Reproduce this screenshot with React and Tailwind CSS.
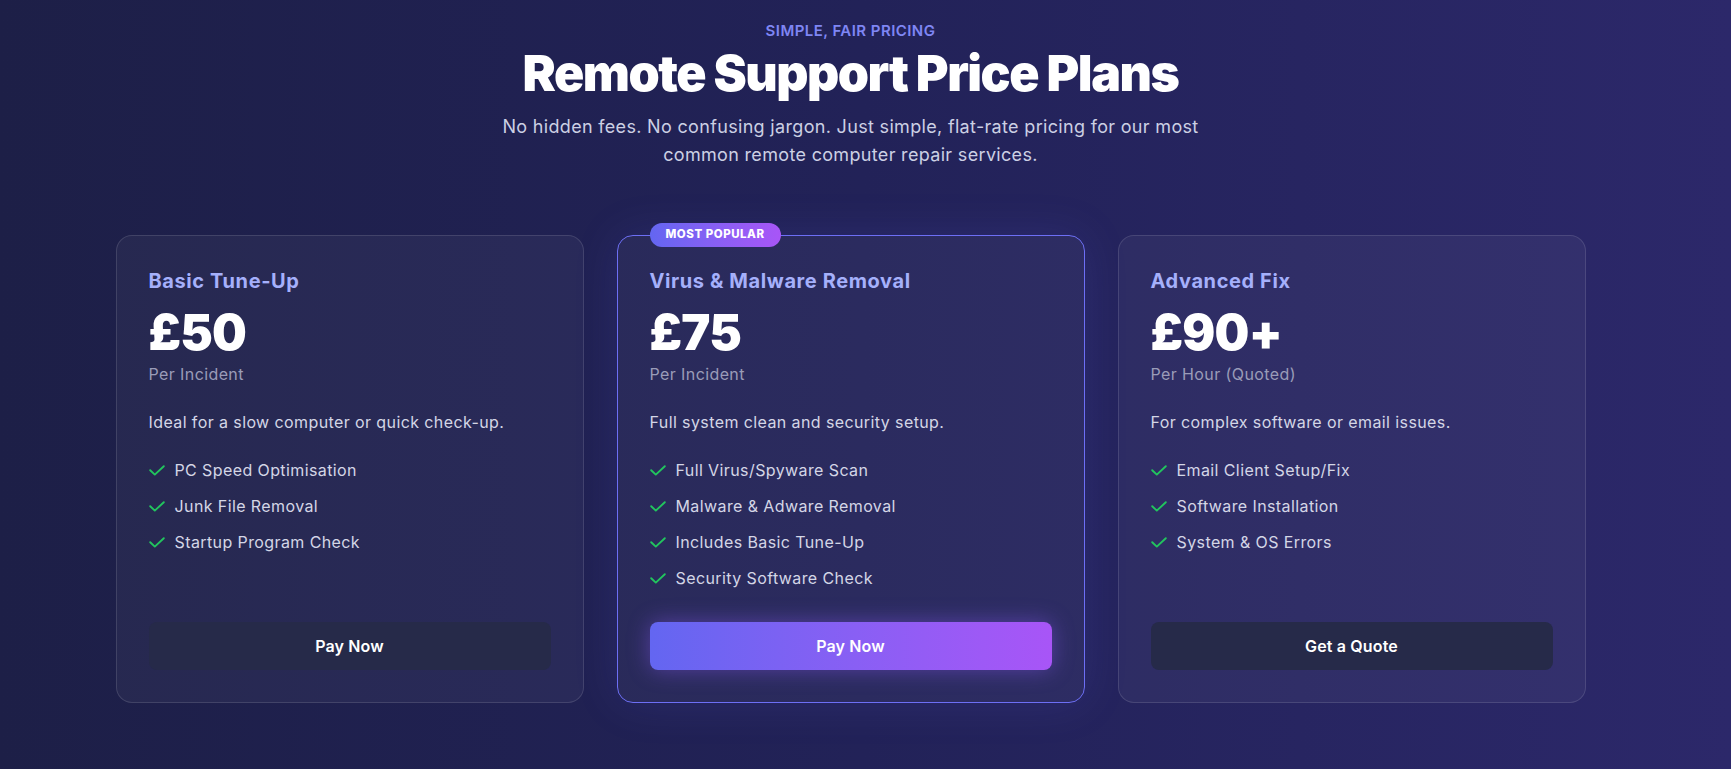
import React from "react";

const plans = [
  {
    name: "Basic Tune-Up",
    price: "£50",
    unit: "Per Incident",
    desc: "Ideal for a slow computer or quick check-up.",
    features: ["PC Speed Optimisation", "Junk File Removal", "Startup Program Check"],
    cta: "Pay Now",
    popular: false,
  },
  {
    name: "Virus & Malware Removal",
    price: "£75",
    unit: "Per Incident",
    desc: "Full system clean and security setup.",
    features: [
      "Full Virus/Spyware Scan",
      "Malware & Adware Removal",
      "Includes Basic Tune-Up",
      "Security Software Check",
    ],
    cta: "Pay Now",
    popular: true,
  },
  {
    name: "Advanced Fix",
    price: "£90+",
    unit: "Per Hour (Quoted)",
    desc: "For complex software or email issues.",
    features: ["Email Client Setup/Fix", "Software Installation", "System & OS Errors"],
    cta: "Get a Quote",
    popular: false,
  },
];

function Check() {
  return (
    <svg width="16" height="11" viewBox="0 0 16 11" fill="none" className="shrink-0">
      <polyline
        points="1.2,5.2 5.8,9.6 14.8,1.2"
        stroke="#22c55e"
        strokeWidth="1.9"
        strokeLinecap="round"
        strokeLinejoin="round"
      />
    </svg>
  );
}

function Card({ plan }) {
  return (
    <div
      className={
        plan.popular
          ? "relative flex flex-col rounded-2xl border border-[#6d6ff5] bg-white/[0.045] px-8 pt-8 pb-8 shadow-[0_0_45px_rgba(99,102,241,0.14)]"
          : "relative flex flex-col rounded-2xl border border-white/[0.12] bg-white/[0.045] px-8 pt-8 pb-8"
      }
    >
      {plan.popular && (
        <div className="absolute left-8 top-[-13px] flex h-6 items-center rounded-full bg-linear-to-r from-[#6366f1] to-[#a855f7] px-4 text-[11.5px] font-extrabold uppercase tracking-[0.045em] text-white">
          MOST POPULAR
        </div>
      )}
      <h3 className="text-[20px] leading-[26px] font-bold text-[#a5b0fb] tracking-[0.03em]">{plan.name}</h3>
      <div className="mt-[14px] text-[49px] leading-[50px] font-black text-white tracking-[-0.015em]">
        {plan.price}
      </div>
      <div className="mt-1 text-[16px] leading-6 text-[#9a9cb8] tracking-[0.025em]">{plan.unit}</div>
      <p className="mt-6 text-[16px] leading-6 text-[#d4d6e6] tracking-[0.025em]">{plan.desc}</p>
      <ul className="mt-6 flex flex-col gap-3">
        {plan.features.map((f) => (
          <li key={f} className="flex items-center gap-[10px] text-[16px] leading-6 text-[#d4d6e6] tracking-[0.025em]">
            <Check />
            <span>{f}</span>
          </li>
        ))}
      </ul>
      <div className="mt-auto pt-8">
        <button
          className={
            plan.popular
              ? "flex h-12 w-full items-center justify-center rounded-lg bg-linear-to-r from-[#6366f1] to-[#a855f7] text-[16px] font-semibold text-white tracking-[0.01em] shadow-[0_0_22px_rgba(139,92,246,0.45)]"
              : "flex h-12 w-full items-center justify-center rounded-lg bg-[#262a49] text-[16px] font-semibold text-white tracking-[0.01em]"
          }
        >
          {plan.cta}
        </button>
      </div>
    </div>
  );
}

export default function App() {
  return (
    <div
      className="min-h-[769px] w-full bg-linear-to-r from-[#1d1f47] via-[#222258] to-[#2c286a]"
      style={{ fontFamily: "Inter, 'Noto Sans', sans-serif" }}
    >
      <div className="pr-[30px] pt-5 pb-16">
        <div className="mx-auto w-[1470px]">
          <div className="flex flex-col items-center text-center">
            <div className="text-[15px] leading-[22px] font-semibold uppercase tracking-[0.03em] text-[#7f86f4]">
              SIMPLE, FAIR PRICING
            </div>
            <h1 className="mt-[3px] text-[50px] leading-[56px] font-black tracking-[-0.03em] text-white">
              Remote Support Price Plans
            </h1>
            <p className="mt-3 max-w-[760px] text-[18px] leading-7 text-[#ccd0e4] tracking-[0.018em]">
              No hidden fees. No confusing jargon. Just simple, flat-rate pricing for our most
              <br />
              common remote computer repair services.
            </p>
          </div>
          <div className="mt-[66px] grid grid-cols-3 gap-[33px]">
            {plans.map((p) => (
              <Card key={p.name} plan={p} />
            ))}
          </div>
        </div>
      </div>
    </div>
  );
}
